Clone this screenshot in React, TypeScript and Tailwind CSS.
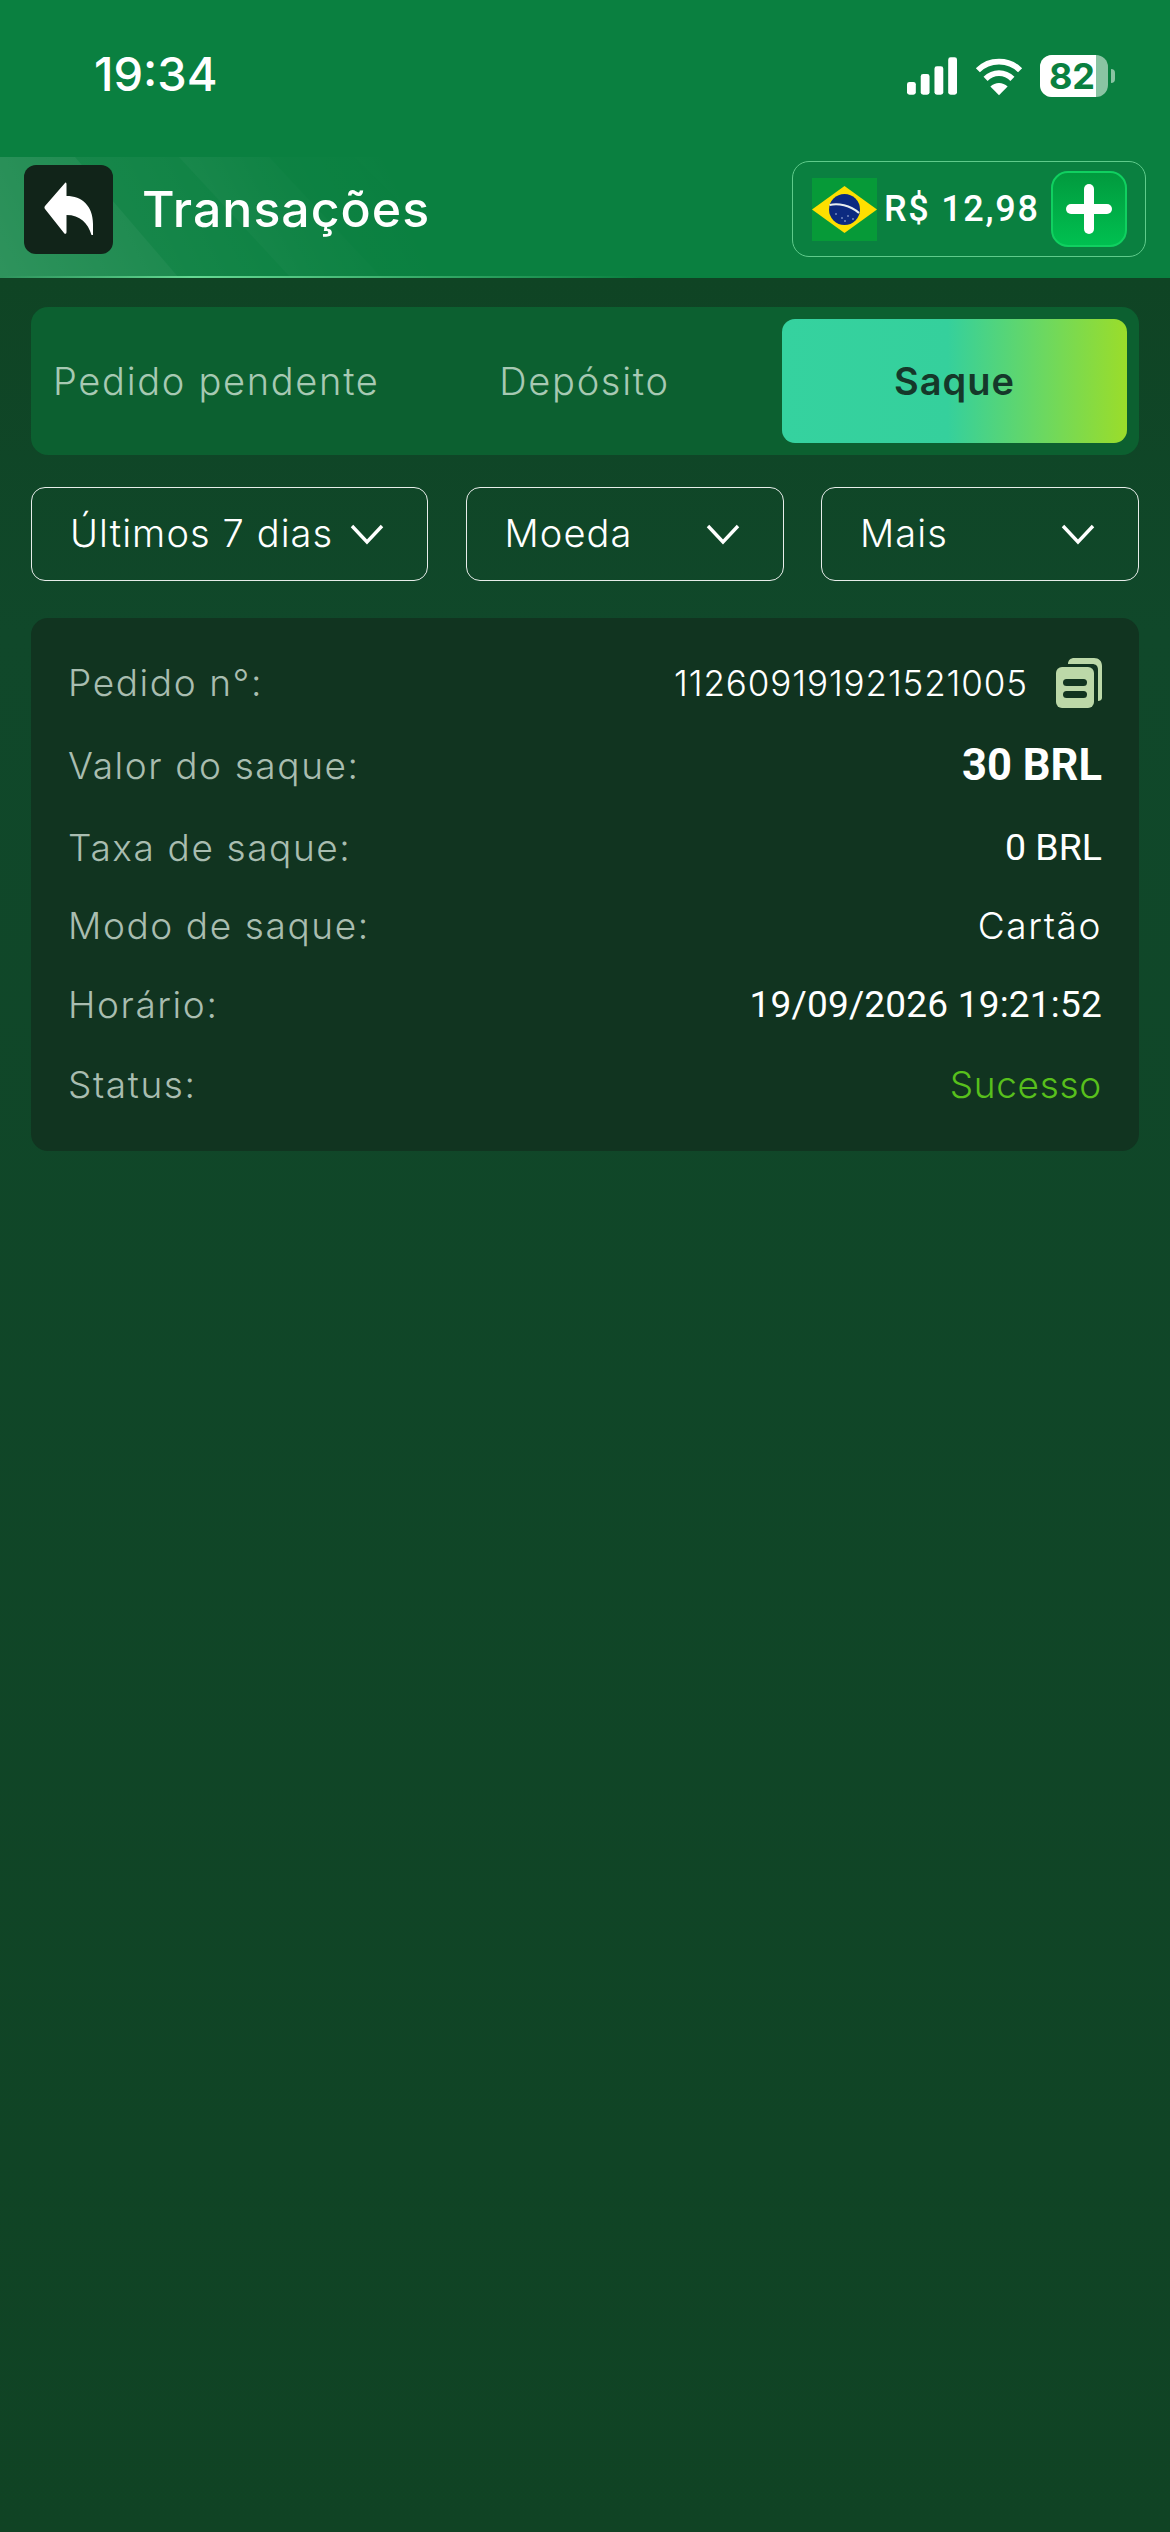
import React from 'react';

const wide = "font-['Inter',sans-serif]";
const num = "font-['Roboto',sans-serif]";

const Chevron: React.FC = () => (
  <svg width="36" height="24" viewBox="0 0 36 24" fill="none" className="shrink-0">
    <path d="M3 4 L18 20 L33 4" stroke="#fff" strokeWidth="3.4" />
  </svg>
);

const Filter: React.FC<{ label: string; className: string }> = ({ label, className }) => (
  <div className={`h-[94px] rounded-[14px] border border-white/90 flex items-center justify-between ${className}`}>
    <span className={`${wide} font-light text-[38px] leading-[90px] -translate-y-[1px] tracking-[1.1px] text-white whitespace-nowrap`}>{label}</span>
    <Chevron />
  </div>
);

const Row: React.FC<{ label: string; h: string; children: React.ReactNode }> = ({ label, h, children }) => (
  <div className={`${h} flex items-center justify-between`}>
    <span className={`${wide} font-light text-[37px] tracking-[1.6px] text-[#a9bdb0]`}>{label}</span>
    {children}
  </div>
);

const BrazilFlag: React.FC = () => (
  <svg width="65" height="63" viewBox="0 0 65 63" className="shrink-0">
    <rect width="65" height="63" fill="#069a38" />
    <path d="M32.5 8 L65 31.5 L32.5 55 L0 31.5 Z" fill="#fedf00" />
    <circle cx="32.5" cy="31.5" r="15.5" fill="#0c2a80" />
    <path d="M17.5 27 C26 25 38 27 47 35" stroke="#e8eef0" strokeWidth="2" fill="none" />
    <g fill="#b9c8e8">
      <circle cx="24" cy="36" r="0.8" />
      <circle cx="30" cy="40" r="0.8" />
      <circle cx="36" cy="38" r="0.8" />
      <circle cx="41" cy="41" r="0.8" />
      <circle cx="33" cy="43" r="0.8" />
    </g>
  </svg>
);

export default function App() {
  return (
    <div className="w-[1170px] min-h-[2532px] bg-[linear-gradient(180deg,#0f4424_11%,#10482a_25%,#104324_100%)]">
      <header className="relative h-[278px] bg-[#0a8040] overflow-hidden">
        <svg className="absolute left-0 top-[157px]" width="640" height="121" viewBox="0 0 640 121">
          <defs>
            <linearGradient id="stripe" gradientUnits="userSpaceOnUse" x1="0" y1="121" x2="360" y2="-60">
              <stop offset="0" stopColor="#fff" stopOpacity="0.15" />
              <stop offset="0.7" stopColor="#fff" stopOpacity="0.03" />
              <stop offset="1" stopColor="#fff" stopOpacity="0" />
            </linearGradient>
            <linearGradient id="line" x1="0" y1="0" x2="1" y2="0">
              <stop offset="0" stopColor="#6fe39c" stopOpacity="0" />
              <stop offset="0.3" stopColor="#6fe39c" stopOpacity="0.9" />
              <stop offset="1" stopColor="#6fe39c" stopOpacity="0" />
            </linearGradient>
          </defs>
          <path d="M0 0 L75 0 L179 121 L0 121 Z" fill="url(#stripe)" />
          <path d="M75 0 L179 0 L291 121 L179 121 Z" fill="url(#stripe)" opacity="0.55" />
          <path d="M179 0 L269 0 L382 121 L291 121 Z" fill="url(#stripe)" />
          <path d="M269 0 L354 0 L476 121 L382 121 Z" fill="url(#stripe)" opacity="0.5" />
          <path d="M354 0 L448 0 L560 121 L476 121 Z" fill="url(#stripe)" />
          <rect x="0" y="119" width="640" height="2" fill="url(#line)" />
        </svg>

        <div className="relative h-[140px] pl-[94px] pr-[55px] pt-[48px] flex items-start justify-between">
          <span className={`${wide} text-[47px] leading-[52px] font-medium text-white`}>19:34</span>
          <div className="flex items-center gap-[17px] pt-[7px]">
            <svg width="51" height="38" viewBox="0 0 52 38" fill="#fff">
              <rect x="0" y="25" width="9" height="13" rx="2.5" />
              <rect x="14" y="17" width="9" height="21" rx="2.5" />
              <rect x="28" y="9" width="9" height="29" rx="2.5" />
              <rect x="42" y="0" width="9" height="38" rx="2.5" />
            </svg>
            <svg width="48" height="40" viewBox="0 0 50 40" fill="none" stroke="#fff">
              <path d="M3 14 C15 2 35 2 47 14" strokeWidth="6" />
              <path d="M11 23 C19 15 31 15 39 23" strokeWidth="6" />
              <path d="M25 40 L16 31 C21 26 29 26 34 31 Z" fill="#fff" stroke="none" />
            </svg>
            <div className="relative flex items-center">
              <div className="relative w-[68px] h-[42px] rounded-[12px] bg-[#8ac4a3] overflow-hidden flex items-center">
                <div className="h-full w-[56px] bg-white flex items-center justify-end">
                  <span className={`${wide} text-[36px] leading-none font-bold text-[#0a8040] pr-[1px]`}>82</span>
                </div>
              </div>
              <div className="ml-[3px] w-[4px] h-[14px] rounded-r-full bg-[#8ac4a3]" />
            </div>
          </div>
        </div>

        <div className="relative h-[138px] pl-[24px] pr-[24px] flex items-center justify-between">
          <div className="flex items-center gap-[29px]">
            <div className="w-[89px] h-[89px] rounded-[12px] bg-[#112419] flex items-center justify-center">
              <svg width="50" height="54" viewBox="0 0 50 54" fill="#fff">
                <path d="M21 1 C21.5 0 22.5 0.5 22.5 2 L22.5 14 C38 14 49 24 49 42 L49 53 L47.5 53 C44 41 36 33 22.5 33 L22.5 50 C22.5 52 21 52.5 20 51 L1 27 C0.3 26 0.3 25 1 24 Z" />
              </svg>
            </div>
            <span className={`${wide} text-[50px] font-medium tracking-[1px] text-white`}>Transações</span>
          </div>
          <div className="w-[354px] h-[96px] rounded-[17px] border border-[#5fcb8b] flex items-center pl-[19px] pr-[18px]">
            <BrazilFlag />
            <span className={`${num} ml-[7px] text-[36px] font-medium tracking-[1.7px] text-white whitespace-nowrap`}>R$ 12,98</span>
            <div className="ml-auto w-[76px] h-[76px] rounded-[17px] bg-gradient-to-b from-[#019a3e] to-[#00c050] border-2 border-[#10d060] flex items-center justify-center">
              <svg width="46" height="50" viewBox="0 0 46 50" fill="#fff">
                <rect x="18" y="0" width="10" height="50" rx="5" />
                <rect x="0" y="20" width="46" height="10" rx="5" />
              </svg>
            </div>
          </div>
        </div>
      </header>

      <main className="px-[31px] pt-[29px]">
        <div className="h-[148px] rounded-[17px] bg-[#0c6030] pl-[22px] pr-[12px] flex items-center">
          <span className={`${wide} font-light text-[38px] tracking-[1.7px] text-[#a7c9b3] w-[372px] whitespace-nowrap`}>Pedido pendente</span>
          <span className={`${wide} font-light text-[38px] tracking-[1.7px] text-[#a7c9b3] flex-1 text-center pr-[38px]`}>Depósito</span>
          <div className="w-[345px] h-[124px] rounded-[13px] bg-[linear-gradient(90deg,#35d29f_0%,#35d09c_48%,#6cd860_76%,#9bdd2a_100%)] flex items-center justify-center">
            <span className={`${wide} font-semibold text-[38px] tracking-[1px] text-[#15382a]`}>Saque</span>
          </div>
        </div>

        <div className="mt-[32px] flex justify-between">
          <Filter label="Últimos 7 dias" className="w-[397px] pl-[38px] pr-[42px]" />
          <Filter label="Moeda" className="w-[318px] pl-[38px] pr-[42px]" />
          <Filter label="Mais" className="w-[318px] pl-[38px] pr-[42px]" />
        </div>

        <div className="mt-[37px] h-[533px] rounded-[17px] bg-[#113420] px-[37px] pt-[24px]">
          <Row label="Pedido n°:" h="h-[82px]">
            <div className="flex items-center gap-[28px]">
              <span className={`${wide} font-light text-[35px] tracking-[0.9px] text-white`}>112609191921521005</span>
              <svg width="46" height="50" viewBox="0 0 46 50" className="shrink-0">
                <path d="M12 6 C12 2 15 0 18 0 L38 0 C43 0 46 3 46 8 L46 40 C46 42 44 43 42 43 L42 12 C42 8 40 6 36 6 Z" fill="#bcd8a8" />
                <rect x="0" y="9" width="38" height="41" rx="6" fill="#bcd8a8" />
                <rect x="7" y="21" width="24" height="7" rx="3.5" fill="#113420" />
                <rect x="7" y="33" width="24" height="7" rx="3.5" fill="#113420" />
              </svg>
            </div>
          </Row>
          <Row label="Valor do saque:" h="h-[84px]">
            <span className={`${num} font-bold text-[43.5px] text-white`}>30 BRL</span>
          </Row>
          <Row label="Taxa de saque:" h="h-[79px]">
            <span className={`${num} text-[37.5px] text-white`}>0 BRL</span>
          </Row>
          <Row label="Modo de saque:" h="h-[78px]">
            <span className={`${wide} font-light text-[37px] tracking-[1.6px] text-white`}>Cartão</span>
          </Row>
          <Row label="Horário:" h="h-[80px]">
            <span className={`${num} text-[37px] tracking-[0.2px] text-white`}>19/09/2026 19:21:52</span>
          </Row>
          <Row label="Status:" h="h-[80px]">
            <span className={`${wide} font-light text-[37px] tracking-[0.7px] text-[#58c01c]`}>Sucesso</span>
          </Row>
        </div>
      </main>
    </div>
  );
}
